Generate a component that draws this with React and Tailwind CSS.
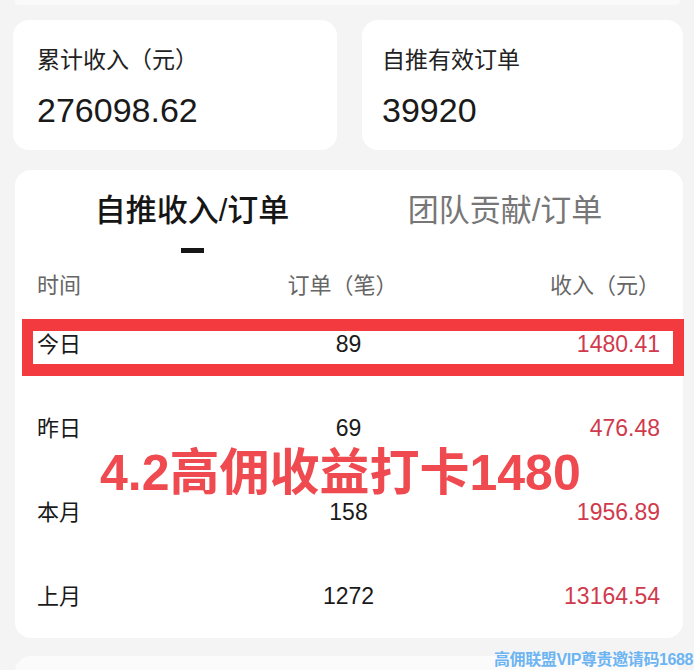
import React from "react";

const rows = [
  { label: "今日", orders: "89", income: "1480.41" },
  { label: "昨日", orders: "69", income: "476.48" },
  { label: "本月", orders: "158", income: "1956.89" },
  { label: "上月", orders: "1272", income: "13164.54" },
];

const font = {
  fontFamily: '"Liberation Sans", "Noto Sans CJK SC", sans-serif',
};

export default function App() {
  return (
    <div
      className="relative w-[694px] h-[670px] overflow-hidden bg-[#f4f4f4]"
      style={font}
    >
      {/* card above, cut off */}
      <div className="mx-[14px] h-[5px] rounded-b-2xl bg-[#fafafa]" />

      {/* summary cards */}
      <div className="flex gap-[25px] pl-[13px] pr-[11px] pt-[15px]">
        <div className="w-[324px] h-[130px] rounded-2xl bg-white pl-[24px] pt-[25px]">
          <p className="text-[23px] leading-[30px] text-[#222]">累计收入（元）</p>
          <p className="mt-[15px] text-[34px] leading-[40px] font-medium text-[#1a1a1a]">
            276098.62
          </p>
        </div>
        <div className="flex-1 h-[130px] rounded-2xl bg-white pl-[20px] pt-[25px]">
          <p className="text-[23px] leading-[30px] text-[#222]">自推有效订单</p>
          <p className="mt-[15px] text-[34px] leading-[40px] font-medium text-[#1a1a1a]">
            39920
          </p>
        </div>
      </div>

      {/* main card */}
      <div className="ml-[15px] mr-[11px] mt-[20px] rounded-2xl bg-white pt-[21px]">
        <div className="flex">
          <div className="w-[354px] flex flex-col items-center">
            <span className="text-[31px] leading-[40px] font-medium text-[#161616]">
              自推收入/订单
            </span>
            <span className="mt-[17px] w-[23px] h-[5px] bg-[#161616]" />
          </div>
          <div className="w-[272px] flex flex-col items-center">
            <span className="text-[31px] leading-[40px] text-[#777]">团队贡献/订单</span>
          </div>
        </div>

        <div className="mt-[17px] flex items-center h-[30px] pl-[22px] pr-[23px] text-[22px] text-[#666]">
          <span className="flex-1">时间</span>
          <span className="w-[130px] text-center pr-[12px]">订单（笔）</span>
          <span className="flex-1 text-right">收入（元）</span>
        </div>

        <div className="pt-[2px]">
          {rows.map((r) => (
            <div
              key={r.label}
              className="flex items-center h-[84px] pl-[22px] pr-[23px] text-[23px]"
            >
              <span className="flex-1 text-[22px] text-[#1a1a1a]">{r.label}</span>
              <span className="w-[130px] text-center text-[#1a1a1a]">{r.orders}</span>
              <span className="flex-1 text-right text-[#d03a4d]">{r.income}</span>
            </div>
          ))}
        </div>
      </div>

      {/* next card, cut off */}
      <div className="mx-[15px] mt-[18px] h-[40px] rounded-t-2xl bg-[#fbfbfb]" />

      {/* annotation overlay */}
      <div className="absolute left-[22px] top-[319px] w-[662px] h-[57px] border-x-[11px] border-y-[12px] border-[#f23a3f]" />
      <div className="absolute left-[100px] top-[443px] text-[50px] leading-[60px] font-bold text-[#ef4a50] whitespace-nowrap">
        4.2高佣收益打卡1480
      </div>
      <div className="absolute right-[1px] bottom-[1px] text-[16px] leading-[18px] font-bold tracking-[-0.4px] text-[#6db4f2] whitespace-nowrap">
        高佣联盟VIP尊贵邀请码1688
      </div>
    </div>
  );
}
